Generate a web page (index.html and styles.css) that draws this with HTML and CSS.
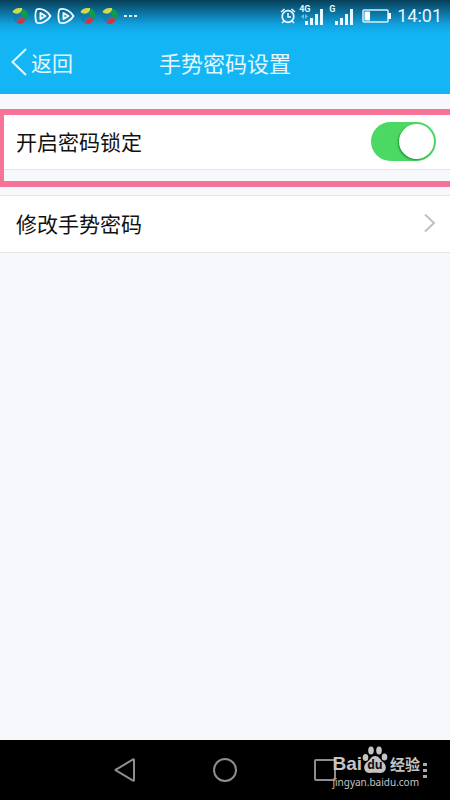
FILE: index.html
```html
<!DOCTYPE html>
<html lang="zh-CN">
<head>
<meta charset="utf-8">
<meta name="viewport" content="width=device-width, initial-scale=1">
<title>手势密码设置</title>
<link rel="stylesheet" href="styles.css">
</head>
<body>
<svg class="defs" aria-hidden="true">
  <symbol id="swirl" viewBox="0 0 16 18">
    <path d="M0 5C1 2 5 .5 9.500 1 10 3 9 5 7 6 5 7 2 7 0 5z" fill="#d3d94c"/>
    <path d="M9.500 1.500c4 1 6.500 5 5.500 8.500-1 2-2.500 3-4 1.500C10.500 9 9.500 7 7.500 6 9 5 10 3 9.500 1.500z" fill="#0b9d4c"/>
    <path d="M4 16c1-3 3-5 5.500-5 2 0 3 .500 3.500 1.500-1 4-5 5.500-9 3.500z" fill="#c63a45"/>
    <path d="M0 7c0 4 1 7 3.500 8.500C4 12 6 10 9 9.500 7 7 3 8 0 7z" fill="#1677a0" opacity=".6"/>
  </symbol>
  <symbol id="play" viewBox="0 0 18 18">
    <path d="M2.500 2.500C7 0 14.500 5 16.500 9c-2 4-9.500 9-14 6.500C1 12 1 6 2.500 2.500z" fill="none" stroke="#f4fbff" stroke-width="1.800" stroke-linejoin="round"/>
    <path d="M6.500 6v6l5-3z" fill="none" stroke="#f4fbff" stroke-width="2" stroke-linejoin="round"/>
  </symbol>
</svg>
<header class="header">
  <div class="status">
    <div class="notices">
      <svg class="swirl"><use href="#swirl"/></svg>
      <svg class="play"><use href="#play"/></svg>
      <svg class="play"><use href="#play"/></svg>
      <svg class="swirl"><use href="#swirl"/></svg>
      <svg class="swirl"><use href="#swirl"/></svg>
      <svg class="more" viewBox="0 0 14 4"><path d="M0 1h3v2H0zM5 1h3v2H5zM10 1h3v2h-3z" fill="#d8edf5"/></svg>
    </div>
    <div class="indicators">
      <svg class="alarm" viewBox="0 0 16 18" fill="none" stroke="#eef9ff">
        <circle cx="8" cy="9.500" r="5.800" stroke-width="1.700"/>
        <path d="M8 6v4h3M1 5l3.500-3M15 5l-3.500-3M4 14l-2 2M12 14l2 2" stroke-width="1.500"/>
      </svg>
      <div class="signal">
        <span class="network">4G</span>
        <svg class="bars" viewBox="0 0 19 17"><path d="M0 13h3v4H0zM5 10h3v7H5zM10 6h3v11h-3zM15 1h3v16h-3z" fill="#e9f8ff"/><path d="M-1 6v5l-3-2.500zM0 6v5l3-2.500z" fill="#6dbfe2"/></svg>
      </div>
      <div class="signal">
        <span class="network">G</span>
        <svg class="bars" viewBox="0 0 19 17"><path d="M0 13h3v4H0zM5 10h3v7H5zM10 6h3v11h-3zM15 1h3v16h-3z" fill="#e9f8ff"/></svg>
      </div>
      <svg class="battery" viewBox="0 0 29 14"><rect x="1" y="1" width="25" height="12" rx="1" fill="none" stroke="#d8f0fa" stroke-width="1.500"/><path d="M2.500 2.500H8v9H2.500zM26 4h3v6h-3z" fill="#fff"/></svg>
      <time class="clock">14:01</time>
    </div>
  </div>
  <div class="titlebar">
    <button class="back" type="button"><svg viewBox="0 0 16 28"><path d="M15 1L1.500 14 15 27" fill="none" stroke="#e3f8ff" stroke-width="2"/></svg>返回</button>
    <h1 class="title">手势密码设置</h1>
  </div>
</header>
<main class="content">
  <section class="highlight">
    <div class="row">
      <label for="lock">开启密码锁定</label>
      <input class="switch" id="lock" type="checkbox" role="switch" checked>
    </div>
  </section>
  <a class="row link" href="#change">修改手势密码<svg class="chevron" viewBox="0 0 12 20"><path d="M1 1.500l9 8.500-9 8.500" fill="none" stroke="#c0c0c4" stroke-width="2"/></svg></a>
</main>
<footer class="navbar">
  <button type="button" aria-label="后退"><svg viewBox="0 0 24 24"><path d="M21 2v20q0 1-1 .500l-17-10q-1-.500 0-1l17-10q1-.500 1 .500z"/></svg></button>
  <button type="button" aria-label="主屏幕"><svg viewBox="0 0 24 24"><circle cx="12" cy="12" r="11"/></svg></button>
  <button type="button" aria-label="最近任务"><svg viewBox="0 0 24 24"><rect x="2" y="2" width="20" height="20" rx="1"/></svg></button>
  <svg class="dots" viewBox="0 0 4 16"><path d="M0 0h4v3H0zM0 6h4v3H0zM0 12h4v3H0z" fill="#aaa"/></svg>
  <div class="watermark">
    <div class="brand">
      <span class="latin">Bai</span>
      <span class="paw">
        <svg viewBox="0 0 26 28" fill="#c4c4c4"><ellipse cx="3.500" cy="11.500" rx="2.800" ry="3.600"/><ellipse cx="9" cy="4.500" rx="2.800" ry="4"/><ellipse cx="17" cy="4.500" rx="2.800" ry="4"/><ellipse cx="22.500" cy="11" rx="2.800" ry="3.600"/><path d="M13 10c4 0 4.500 3 8 6 5 4 3 11.500-3 11-3-.500-7-.500-10 0-6 .500-8-7-3-11 4-3 4-6 8-6z"/></svg>
        <span class="du">du</span>
      </span>
      <span class="hanzi">经验</span>
    </div>
    <span class="site">jingyan.baidu.com</span>
  </div>
</footer>
</body>
</html>
```
FILE: styles.css
```css
* { box-sizing: border-box; }
body {
  margin: 0;
  min-height: 100vh;
  display: flex;
  flex-direction: column;
  background: #f6f8fb;
  color: #111;
  font-family: Roboto, "Noto Sans CJK SC", sans-serif;
  font-size: 21px;
}
svg { display: block; flex: none; }
button { font: inherit; background: none; border: 0; padding: 0; }
.defs { position: absolute; width: 0; height: 0; }

.header {
  background: linear-gradient(#083f58 0, #0b6792 10px, #10a0dc 24px, #13b5f5 34px);
  color: #e3f8ff;
}
.status {
  height: 32px;
  padding: 0 8px 0 12px;
  display: flex;
  align-items: center;
  justify-content: space-between;
}
.notices, .indicators { display: flex; align-items: center; }
.notices { gap: 5px; }
.swirl { width: 17px; height: 18px; }
.play { width: 18px; height: 18px; }
.more { width: 14px; height: 4px; }
.indicators { gap: 6px; }
.alarm { width: 16px; height: 18px; }
.signal { position: relative; padding-left: 5px; }
.signal:nth-child(2) { margin-left: -2px; }
.signal:nth-child(3) { margin-right: 2px; }
.network {
  position: absolute;
  top: -3px;
  left: -1px;
  font-size: 9px;
  line-height: 9px;
  font-weight: 700;
}
.bars { width: 19px; height: 17px; overflow: visible; }
.battery { width: 29px; height: 14px; }
.clock { font-size: 18px; line-height: 32px; }

.titlebar {
  height: 62px;
  padding: 0 11px 2px;
  display: grid;
  grid-template-columns: 1fr auto 1fr;
  align-items: center;
}
.back {
  display: flex;
  align-items: center;
  gap: 4px;
  color: inherit;
}
.back svg { width: 16px; height: 28px; }
.title { margin: 0; font-size: 22px; font-weight: 400; }

.content { flex: 1; padding-top: 15px; }
.highlight {
  margin-bottom: 8px;
  padding-bottom: 11px;
  border: solid #f87398;
  border-width: 6px 0 6px 4px;
}
.row {
  height: 55px;
  padding: 0 14px 2px 12px;
  display: flex;
  align-items: center;
  justify-content: space-between;
  background: #fff;
  border-bottom: 1px solid #e2e4e7;
}
.link {
  height: 58px;
  padding-left: 16px;
  border-top: 1px solid #e2e4e7;
  color: inherit;
  text-decoration: none;
}
.chevron { width: 12px; height: 20px; }
.switch {
  appearance: none;
  margin: 0;
  width: 65px;
  height: 39px;
  padding: 2px;
  display: flex;
  justify-content: flex-end;
  border-radius: 20px;
  background: #4bd964;
}
.switch::before {
  content: "";
  width: 35px;
  height: 35px;
  border-radius: 50%;
  background: #fff;
  box-shadow: -1px 1px 2px #278d3c;
}
.switch:not(:checked) { justify-content: flex-start; background: #ddd; }

.navbar {
  position: relative;
  height: 60px;
  padding: 0 75px;
  display: grid;
  grid-template-columns: repeat(3, 1fr);
  align-items: center;
  justify-items: center;
  background: #000;
}
.navbar button svg {
  width: 24px;
  height: 24px;
  fill: none;
  stroke: #8d8d8d;
  stroke-width: 2;
}
.dots { position: absolute; right: 23px; top: 23px; width: 4px; height: 16px; }
.watermark {
  position: absolute;
  right: 30px;
  top: 6px;
  color: #c4c4c4;
  font-family: "Noto Sans", "Noto Sans CJK SC", sans-serif;
}
.brand { display: flex; align-items: flex-end; line-height: 20px; height: 28px; }
.latin { font-family: "Liberation Sans", sans-serif; font-size: 19px; font-weight: 700; }
.paw { position: relative; width: 26px; }
.paw svg { width: 26px; height: 28px; }
.du {
  position: absolute;
  inset: auto 0 3px;
  color: #111;
  font-size: 12px;
  line-height: 12px;
  font-weight: 700;
  text-align: center;
}
.hanzi { margin-left: 2px; font-size: 15px; font-weight: 700; }
.site { display: block; margin-top: 2px; font-size: 10px; line-height: 12px; }
```
